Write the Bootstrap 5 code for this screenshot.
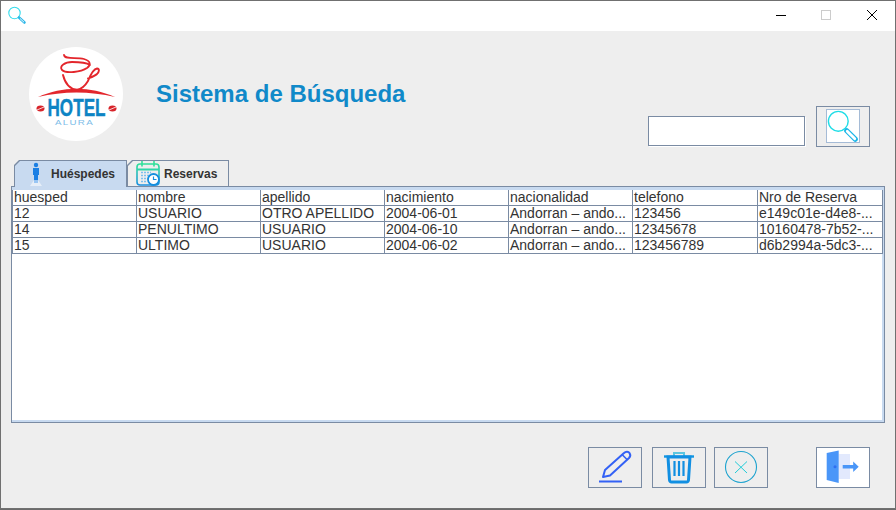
<!DOCTYPE html>
<html lang="es"><head><meta charset="utf-8"><title>Sistema de Búsqueda</title>
<link href="https://cdn.jsdelivr.net/npm/bootstrap@5.3.0/dist/css/bootstrap.min.css" rel="stylesheet">
<style>
html,body{margin:0;height:510px;overflow:hidden;background:#6b6b6b}
body{font-family:"Liberation Sans",Arial,sans-serif}
.win{width:896px;height:509px;background:#eee;border:1px solid #707070}
.tbar{height:30px;background:#fff}
.tbar svg{display:block}
.hdr{height:129px;padding:16px 25px 13px 28px}
.logo{width:94px;height:94px;display:block;flex:none}
.ttl{font:700 24px/28px "Liberation Sans",Arial,sans-serif;color:#1089c9;margin:33px 0 0 33px}
.srch{width:157px;height:30px;flex:none;border:1px solid #7a8ba3;border-radius:0;background:#fff;padding:0;box-shadow:1px 1px 0 #fff;margin:0 11px 1px 0}
.sqb{width:54px;height:41px;border:1px solid #7a8ba3;border-radius:0;padding:0;background:#eee;display:flex;align-items:center;justify-content:center;flex:none}
.sqb svg{display:block}
.sqb.wh{background:#fff}
.sqb.top{align-items:flex-start;padding:2px 0 0 0}
.inr{width:34px;height:34px;background:#fff;border:1px solid #a5bbd6;display:block}
.tabs{height:27px;padding-left:13px;position:relative;z-index:2;margin-bottom:-1px}
.tabo{background:#7a8ba3;clip-path:polygon(5px 0,100% 0,100% 100%,0 100%,0 5px);padding:1px 1px 0 1px;height:27px}
.tabi{background:#eee;clip-path:polygon(5px 0,100% 0,100% 100%,0 100%,0 5px);height:100%;display:flex;align-items:center;font:700 12px/14px "Liberation Sans",Arial,sans-serif;color:#333}
.t1{width:113px}.t1 .tabi{background:#c8daf0}
.t2{width:102px;height:26px}
.t1 svg{margin-left:14px;margin-right:8px;display:block}
.t2 svg{margin-left:8px;margin-right:4px;display:block}
.pnl{margin:0 10px;width:874px;height:237px;border:1px solid #7a8ba3;background:#fff}
.pin{height:100%;border:0 solid #c8daf0;border-width:3px 2px 2px 0}
.tb{table-layout:fixed;width:871px;margin:0;border-collapse:separate;border-spacing:0;font:14px/15px "Liberation Sans",Arial,sans-serif;color:#333}
.tb td{height:16px;padding:0 0 0 1px;border:0;border-right:1px solid #7a8ba3;border-bottom:1px solid #7a8ba3;white-space:nowrap;overflow:hidden;background:#fff;color:#333;box-shadow:none;vertical-align:middle}
.tb td:first-child{border-left:1px solid #7a8ba3;padding-left:1px}
.ftr{padding:24px 25px 0 0}
.m10{margin-right:10px}.m8{margin-right:8px}.m48{margin-right:48px}
</style></head><body>
<div class="win d-flex flex-column">
 <div class="tbar">
  <svg width="894" height="30" viewBox="1 1 894 30" fill="none">
   <circle cx="14.5" cy="13" r="5.7" stroke="#35dcec" stroke-width="1.1"/>
   <path d="M19 17.500l5.500 5" stroke="#2fb7e8" stroke-width="2.600" stroke-linecap="round"/><path d="M20 18.500l4 3.700" stroke="#e6f8fd" stroke-width="1"/>
   <path d="M776 15.500h10" stroke="#000" stroke-width="1"/>
   <rect x="821.500" y="10.500" width="9" height="9" stroke="#ccc"/>
   <path d="M867 10l10 10M877 10l-10 10" stroke="#000" stroke-width="1"/>
  </svg>
 </div>
 <div class="hdr d-flex align-items-start">
  <svg class="logo" viewBox="29 47 94 94">
   <circle cx="76" cy="94" r="47" fill="#fff"/>
   <g fill="none" stroke="#e3262c" stroke-linecap="round">
    <path d="M64 55c1 5 12 2 20 4 7 2 7 6 3 9-6 4-21 6-25 2-3-4 3-8 10-8 7 0 15 1 18 3" stroke-width="1.800"/>
    <path d="M63 75c2 8 7 14 14 15 5-1 8-4 11-9 2-5 5-12 9-12.500 3 0 2 4 0 5.500-2 2-5 3-9 4.500" stroke-width="1.900"/>
   </g>
   <path d="M38 97c25-11 52-11 77 0-25-6-52-6-77 0z" fill="#e3262c"/>
   <ellipse cx="40.500" cy="108.500" rx="4" ry="3" fill="#d8242a"/><ellipse cx="112.500" cy="108.500" rx="4" ry="3" fill="#d8242a"/>
   <path d="M37 110l7-3M109 110l7-3" stroke="#fff" stroke-width=".8"/>
   <text transform="translate(47.500 115.500) scale(.745 1)" font-family="Liberation Sans" font-weight="700" font-size="23" fill="#0d84c4" stroke="#0d84c4" stroke-width=".4">HOTEL</text>
   <text transform="translate(55 124.500) scale(1.300 1)" font-family="Liberation Sans" font-size="7.500" letter-spacing="1" fill="#7dbde8">ALURA</text>
  </svg>
  <div class="ttl">Sistema de Búsqueda</div>
  <div class="ms-auto d-flex align-items-end align-self-end">
   <input class="srch form-control" type="text" aria-label="Buscar">
   <button class="sqb top btn" type="button" aria-label="Buscar">
    <svg width="34" height="34" viewBox="826 109 34 34" class="inr" fill="none">
     <circle cx="838" cy="121" r="10.500" stroke="#1fdde6" stroke-width="1.500"/>
     <path d="M847 131l9 9" stroke="#1cb6e8" stroke-width="5.500" stroke-linecap="round"/><path d="M847.500 131.500l8 8" stroke="#fff" stroke-width="3" stroke-linecap="round"/>
    </svg>
   </button>
  </div>
 </div>
 <div class="tabs d-flex">
  <div class="tabo t1"><div class="tabi">
   <svg width="14" height="25" viewBox="28 160 14 25"><circle cx="35" cy="163" r="2.200" fill="#1b7fe4"/><path d="M32 166h6v7h-1v8h-4v-8h-1z" fill="#1b7fe4"/><path d="M33 178h4l4 6h-12z" fill="#fff" opacity=".55"/></svg>
   Huéspedes</div></div>
  <div class="tabo t2"><div class="tabi">
   <svg width="24" height="25" viewBox="136 161 24 25" fill="none">
    <defs><linearGradient id="g" x1="0" y1="0" x2="0" y2="1"><stop offset="0" stop-color="#2fe09a"/><stop offset="1" stop-color="#1a90e0"/></linearGradient></defs>
    <rect x="137" y="164" width="22" height="21" rx="3" stroke="url(#g)" stroke-width="1.600"/>
    <path d="M137 169.500h22" stroke="#2fd6a8" stroke-width="2"/>
    <path d="M142 161v5M154 161v5" stroke="#2fe09a" stroke-width="1.600" stroke-linecap="round"/>
    <path d="M141 172.500h10M141 175.500h9M141 178.500h7M141 181.500h6" stroke="#7cc0ee" stroke-width="1.600" stroke-dasharray="2 1"/>
    <circle cx="153.500" cy="179.500" r="5.500" fill="#fff" stroke="#158ede" stroke-width="1.800"/>
    <path d="M153.500 176.500v3h3" stroke="#158ede" stroke-width="1.200"/>
   </svg>
   Reservas</div></div>
 </div>
 <div class="pnl"><div class="pin">
  <table class="tb table"><colgroup><col style="width:125px"><col style="width:124px"><col style="width:124px"><col style="width:124px"><col style="width:124px"><col style="width:125px"><col style="width:125px"></colgroup>
  <tbody>
   <tr><td>huesped</td><td>nombre</td><td>apellido</td><td>nacimiento</td><td>nacionalidad</td><td>telefono</td><td>Nro de Reserva</td></tr>
   <tr><td>12</td><td>USUARIO</td><td>OTRO APELLIDO</td><td>2004-06-01</td><td>Andorran – ando...</td><td>123456</td><td>e149c01e-d4e8-...</td></tr>
   <tr><td>14</td><td>PENULTIMO</td><td>USUARIO</td><td>2004-06-10</td><td>Andorran – ando...</td><td>12345678</td><td>10160478-7b52-...</td></tr>
   <tr><td>15</td><td>ULTIMO</td><td>USUARIO</td><td>2004-06-02</td><td>Andorran – ando...</td><td>123456789</td><td>d6b2994a-5dc3-...</td></tr>
  </tbody></table>
 </div></div>
 <div class="ftr d-flex justify-content-end">
  <button class="sqb btn m10" type="button" aria-label="Editar"><svg width="52" height="39" viewBox="589 448 52 39" fill="none">
    <path d="M603 477l2-7 19-17c2-2 4.500-1.500 5.500 0s1 3.500-.5 5l-19 17.500z" stroke="#3361f5" stroke-width="2" stroke-linejoin="round"/>
    <path d="M622 454.500l5.500 5.500" stroke="#3361f5" stroke-width="1.600"/>
    <path d="M599 481.500h23" stroke="#3361f5" stroke-width="2"/>
   </svg></button>
  <button class="sqb btn m8" type="button" aria-label="Eliminar"><svg width="52" height="39" viewBox="653 448 52 39" fill="none">
    <path d="M674 456v-3h10v3" stroke="#5cc6e0" stroke-width="2"/>
    <path d="M664 456.500h30" stroke="#1196e2" stroke-width="2.400"/>
    <path d="M668 457l1.500 23c0 1 1 2 2 2h15c1 0 2-1 2-2l1.500-23z" stroke="#118fe2" stroke-width="3"/>
    <path d="M674.500 461v15M679 461v15M683.500 461v15" stroke="#118fe2" stroke-width="2.200"/>
   </svg></button>
  <button class="sqb btn m48" type="button" aria-label="Cancelar"><svg width="52" height="39" viewBox="715 448 52 39" fill="none">
    <circle cx="741" cy="467" r="15.500" stroke="#1ea3cf" stroke-width="1.100"/>
    <path d="M735 461.500l12 11.500M747 461.500l-12 11.500" stroke="#22ccd8" stroke-width="1"/>
   </svg></button>
  <button class="sqb btn wh" type="button" aria-label="Salir"><svg width="52" height="39" viewBox="817 448 52 39">
    <path d="M838.700 454h11.300v25h-11.300z" fill="#e2e9fd"/>
    <path d="M826.700 453l12-2.500v32.500l-12-3z" fill="#4a96f8"/>
    <circle cx="835" cy="466.800" r="1.500" fill="#2f6ff0"/>
    <path d="M842.700 465h10.500v-3.500l5.500 5.300-5.500 5.300v-3.500h-10.500z" fill="#4a96f8"/>
   </svg></button>
 </div>
</div>
<script src="https://cdn.jsdelivr.net/npm/bootstrap@5.3.0/dist/js/bootstrap.bundle.min.js"></script>
</body></html>
